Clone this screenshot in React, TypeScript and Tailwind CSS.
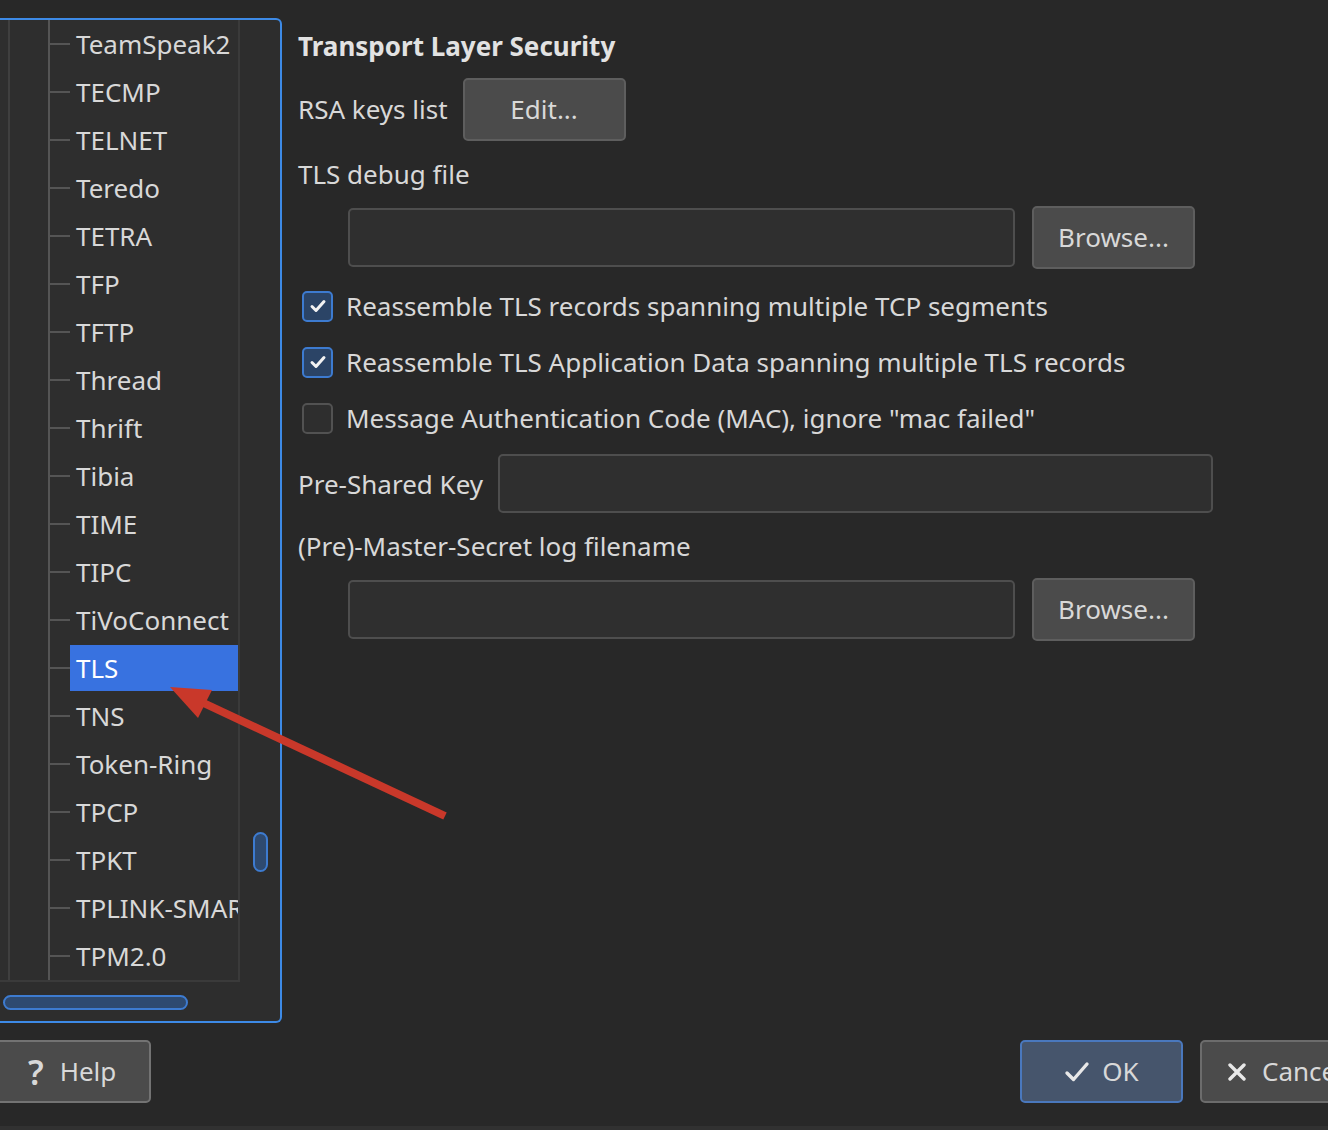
import React from "react";

const items = [
  "TeamSpeak2",
  "TECMP",
  "TELNET",
  "Teredo",
  "TETRA",
  "TFP",
  "TFTP",
  "Thread",
  "Thrift",
  "Tibia",
  "TIME",
  "TIPC",
  "TiVoConnect",
  "TLS",
  "TNS",
  "Token-Ring",
  "TPCP",
  "TPKT",
  "TPLINK-SMARTHOME",
  "TPM2.0",
];

function Check() {
  return (
    <svg width="20" height="20" viewBox="0 0 20 20" fill="none">
      <path d="M4 10.5l4 4 8-9" stroke="#f2f2f2" strokeWidth="3" strokeLinecap="round" strokeLinejoin="round" />
    </svg>
  );
}

function CheckRow({ checked, label }: { checked: boolean; label: string }) {
  return (
    <div className="flex h-[56px] items-center">
      <div
        className={
          checked
            ? "ml-[4px] flex h-[31px] w-[31px] items-center justify-center rounded-[5px] border-2 border-[#3d7bd0] bg-[#2b4466]"
            : "ml-[4px] h-[31px] w-[31px] rounded-[5px] border-2 border-[#525252] bg-[#2e2e2e]"
        }
      >
        {checked && <Check />}
      </div>
      <span className="ml-[13px] whitespace-nowrap">{label}</span>
    </div>
  );
}

function Button({ children, className = "" }: { children: React.ReactNode; className?: string }) {
  return (
    <div
      className={
        "flex h-[63px] w-[163px] shrink-0 items-center justify-center rounded-[5px] border-2 border-[#5e5e5e] bg-[#4b4b4b] " +
        className
      }
    >
      {children}
    </div>
  );
}

function FileRow() {
  return (
    <div className="flex h-[63px] items-center pl-[50px]">
      <div className="h-[59px] w-[667px] rounded-[5px] border-2 border-[#4e4e4e] bg-[#2f2f2f]" />
      <Button className="ml-[17px]">Browse...</Button>
    </div>
  );
}

export default function App() {
  return (
    <div
      className="relative flex h-[1130px] w-[1328px] flex-col overflow-hidden bg-[#282828] text-[26px] text-[#d8d8d8]"
      style={{ fontFamily: '"Noto Sans", "Open Sans", sans-serif' }}
    >
      <div className="flex items-start">
        {/* Tree panel */}
        <div className="mt-[18px] flex h-[1005px] w-[282px] shrink-0 flex-col rounded-r-[6px] border-2 border-l-0 border-[#3d8ae6] bg-[#2d2d2d]">
          <div className="flex h-[962px]">
            <div className="relative h-[962px] w-[240px] shrink-0 overflow-hidden border-b-2 border-r-2 border-[#3a3a3a] bg-[#2e2e2e]">
              <div className="absolute left-[8px] top-0 h-full w-[2px] bg-[#3f3f3f]" />
              <div className="absolute left-[48px] top-0 h-full w-[2px] bg-[#555555]" />
              <div className="flex flex-col">
                {items.map((it) => (
                  <div key={it} className="flex h-[48px] shrink-0 items-center">
                    <div className="ml-[50px] h-[2px] w-[20px] shrink-0 bg-[#555555]" />
                    <div
                      className={
                        it === "TLS"
                          ? "flex h-[46px] min-w-0 flex-1 items-center overflow-hidden whitespace-nowrap bg-[#3872e0] pl-[6px] text-white"
                          : "flex h-[46px] min-w-0 flex-1 items-center overflow-hidden whitespace-nowrap pl-[6px]"
                      }
                    >
                      {it}
                    </div>
                  </div>
                ))}
              </div>
            </div>
            <div className="flex flex-1 justify-center pt-[812px]">
              <div className="h-[40px] w-[15px] rounded-full border-2 border-[#3d7bd0] bg-[#2e4a70]" />
            </div>
          </div>
          <div className="pl-[3px] pt-[13px]">
            <div className="h-[15px] w-[185px] rounded-full border-2 border-[#3d7bd0] bg-[#2e4a70]" />
          </div>
        </div>

        {/* Form */}
        <div className="ml-[16px] flex flex-col pt-[28px]">
          <div className="flex h-[36px] items-center font-bold text-[#e2e2e2]">Transport Layer Security</div>
          <div className="mt-[14px] flex h-[63px] items-center">
            <span>RSA keys list</span>
            <Button className="ml-[15px]">Edit...</Button>
          </div>
          <div className="mt-[15px] flex h-[36px] items-center">TLS debug file</div>
          <div className="mt-[14px]">
            <FileRow />
          </div>
          <div className="mt-[9px] flex flex-col">
            <CheckRow checked label="Reassemble TLS records spanning multiple TCP segments" />
            <CheckRow checked label="Reassemble TLS Application Data spanning multiple TLS records" />
            <CheckRow checked={false} label={'Message Authentication Code (MAC), ignore "mac failed"'} />
          </div>
          <div className="mt-[8px] flex h-[59px] items-center">
            <span className="mt-[2px] whitespace-nowrap">Pre-Shared Key</span>
            <div className="ml-[15px] h-[59px] w-[715px] rounded-[5px] border-2 border-[#4e4e4e] bg-[#2f2f2f]" />
          </div>
          <div className="mt-[15px] flex h-[36px] items-center">(Pre)-Master-Secret log filename</div>
          <div className="mt-[14px]">
            <FileRow />
          </div>
        </div>
      </div>

      {/* Bottom buttons */}
      <div className="mt-[17px] flex items-center">
        <div className="-ml-[12px] flex h-[63px] w-[163px] shrink-0 items-center rounded-[5px] border-2 border-[#737373] bg-[#4b4b4b] pl-[38px]">
          <span className="text-[34px] font-semibold leading-none">?</span>
          <span className="ml-[16px]">Help</span>
        </div>
        <div className="ml-[869px] flex h-[63px] w-[163px] shrink-0 items-center justify-center rounded-[5px] border-2 border-[#4a78bd] bg-[#46556c]">
          <svg width="26" height="26" viewBox="0 0 26 26" fill="none">
            <path d="M3 14l6.5 6.5L23 5" stroke="#e8e8e8" strokeWidth="3.4" strokeLinecap="round" strokeLinejoin="round" />
          </svg>
          <span className="ml-[12px]">OK</span>
        </div>
        <div className="ml-[17px] flex h-[63px] w-[163px] shrink-0 items-center rounded-[5px] border-2 border-[#6c6c6c] bg-[#4b4b4b] pl-[26px]">
          <svg width="18" height="18" viewBox="0 0 18 18" fill="none">
            <path d="M2 2l14 14M16 2L2 16" stroke="#e8e8e8" strokeWidth="3.4" strokeLinecap="round" />
          </svg>
          <span className="ml-[16px]">Cancel</span>
        </div>
      </div>
      <div className="mt-auto h-[4px] w-full bg-[#313131]" />

      {/* Red annotation arrow */}
      <svg className="pointer-events-none absolute left-0 top-0" width="1328" height="1130">
        <line x1="445" y1="816" x2="195" y2="699" stroke="#c9382a" strokeWidth="8" />
        <polygon points="170,687 212,690 198,718" fill="#c9382a" />
      </svg>
    </div>
  );
}
